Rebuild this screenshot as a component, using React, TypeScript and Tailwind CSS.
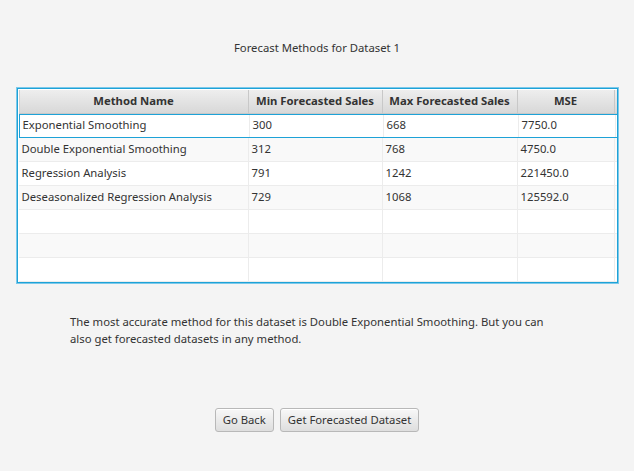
import React from 'react';

const rows = [
  ['Exponential Smoothing', '300', '668', '7750.0'],
  ['Double Exponential Smoothing', '312', '768', '4750.0'],
  ['Regression Analysis', '791', '1242', '221450.0'],
  ['Deseasonalized Regression Analysis', '729', '1068', '125592.0'],
  ['', '', '', ''],
  ['', '', '', ''],
  ['', '', '', ''],
];

const headers = ['Method Name', 'Min Forecasted Sales', 'Max Forecasted Sales', 'MSE'];
const widths = ['w-[230px]', 'w-[134px]', 'w-[135px]', 'w-[97px]'];

export default function App() {
  return (
    <div
      className="w-[634px] h-[471px] bg-[#f4f4f4] text-[#333] flex flex-col items-center text-[11.3px]"
      style={{ fontFamily: '"Noto Sans", "Open Sans", sans-serif' }}
    >
      <div className="mt-[39px] h-[18px] leading-[18px]">Forecast Methods for Dataset 1</div>

      {/* table */}
      <div className="mt-[30px] w-[603px] border border-[#7cc9ea] bg-[#f4f4f4]">
        <div className="border border-[#1ea2d7] h-[195px] flex flex-col pt-px pl-px bg-white">
          <div className="flex h-[24px] bg-gradient-to-b from-[#eeeeee] to-[#d8d8d8] border-b border-[#c8c8c8]">
            {headers.map((h, i) => (
              <div
                key={h}
                className={`${widths[i]} shrink-0 flex items-center justify-center font-bold border-r border-[#c8c8c8] ${i === 0 ? 'border-l border-l-[#d0d0d0]' : ''}`}
              >
                {h}
              </div>
            ))}
          </div>
          {rows.map((r, ri) => (
            <div
              key={ri}
              className={`flex h-[24px] ${ri % 2 === 0 ? 'bg-white' : 'bg-[#f9f9f9]'} ${
                ri === 0 ? 'border-y border-[#1ea2d7] border-l' : 'border-b border-[#ececec]'
              }`}
            >
              {r.map((c, ci) => (
                <div
                  key={ci}
                  className={`${widths[ci]} shrink-0 flex items-center pb-px pl-[3px] border-r border-[#ececec] ${
                    ri === 0 && ci === 0 ? 'w-[229px] pl-[2px]' : ''
                  }`}
                >
                  {c}
                </div>
              ))}
            </div>
          ))}
        </div>
      </div>

      <p className="mt-[29px] w-[480px] self-start ml-[70px] leading-[17px]">
        The most accurate method for this dataset is Double Exponential Smoothing. But you can also get
        forecasted datasets in any method.
      </p>

      <div className="mt-[61px] flex gap-[6px]">
        <button className="h-[24px] px-[7px] rounded-[3px] border border-[#b8b8b8] bg-gradient-to-b from-[#f8f8f8] to-[#dedede] shadow-[inset_0_1px_0_#ffffff]">
          Go Back
        </button>
        <button className="h-[24px] px-[7px] rounded-[3px] border border-[#b8b8b8] bg-gradient-to-b from-[#f8f8f8] to-[#dedede] shadow-[inset_0_1px_0_#ffffff]">
          Get Forecasted Dataset
        </button>
      </div>
    </div>
  );
}
